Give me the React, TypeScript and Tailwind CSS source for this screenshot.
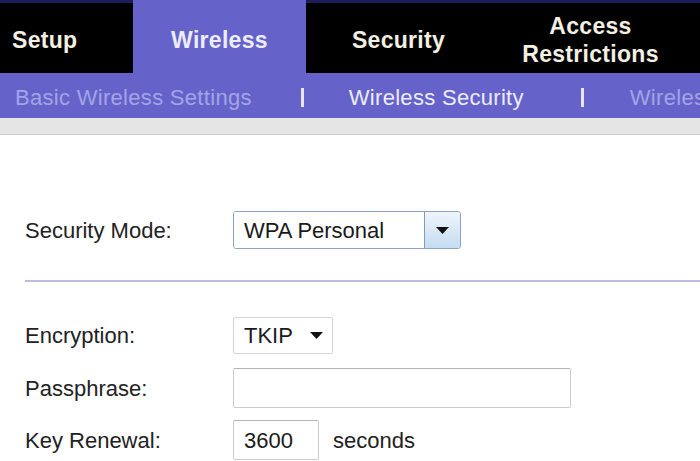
import React from "react";

const Caret = () => (
  <svg width="13" height="7" viewBox="0 0 13 7" className="block">
    <path d="M0 0 H13 L6.5 7 Z" fill="#111" />
  </svg>
);

const App = () => {
  const labelCls = "w-[208px] shrink-0 text-[22px] text-[#222]";

  return (
    <div
      className="w-[700px] h-[461px] overflow-hidden bg-white"
      style={{ fontFamily: '"Liberation Sans", Arial, sans-serif' }}
    >
      {/* Top tabs */}
      <div className="flex h-[73px] text-[23px] font-bold tracking-[0.3px] leading-[28px]">
        <div className="w-[133px] bg-black border-t-[3px] border-[#1d1d5c] flex items-center pt-[3px] pl-[12px] text-[#f4f0e2]">
          Setup
        </div>
        <div className="w-[173px] bg-[#6563c9] flex items-center justify-center pt-[6px] text-[#ececfa]">
          Wireless
        </div>
        <div className="w-[185px] bg-black border-t-[3px] border-[#1d1d5c] flex items-center justify-center pt-[3px] text-[#f4f0e2]">
          Security
        </div>
        <div className="w-[199px] bg-black border-t-[3px] border-[#1d1d5c] flex flex-col items-center justify-center pt-[4px] text-center text-[#f4f0e2]">
          <span>Access</span>
          <span>Restrictions</span>
        </div>
        <div className="flex-1 bg-black border-t-[3px] border-[#1d1d5c]" />
      </div>

      {/* Sub navigation */}
      <div className="h-[45px] bg-[#6563c9] flex items-center pt-[3px] text-[22px] tracking-[0.3px] whitespace-nowrap overflow-hidden">
        <span className="ml-[15px] text-[#a3a3e6]">Basic Wireless Settings</span>
        <span className="ml-[49px] block shrink-0 w-[3px] h-[19px] bg-[#e6e6f8]" />
        <span className="ml-[45px] text-[#ececfc]">Wireless Security</span>
        <span className="ml-[57px] block shrink-0 w-[3px] h-[19px] bg-[#e6e6f8]" />
        <span className="ml-[46px] text-[#a3a3e6]">Wireless MAC Filter</span>
      </div>
      <div className="h-[17px] bg-[#e5e5e5] border-b border-[#cdcdcd]" />

      {/* Form */}
      <div className="pl-[25px]">
        <div className="mt-[76px] flex items-center h-[38px]">
          <div className={labelCls}>Security Mode:</div>
          <div className="w-[228px] h-[38px] flex border border-[#8ea3c2] rounded-[3px] overflow-hidden">
            <div className="flex-1 flex items-center pl-[10px] text-[22px] text-[#1a1a1a] bg-white">
              WPA Personal
            </div>
            <div className="w-[36px] flex items-center justify-center border-l border-[#7f9cc0] bg-gradient-to-b from-[#eef5fc] to-[#c6dcf1]">
              <Caret />
            </div>
          </div>
        </div>

        <div className="mt-[31px] h-[2px] bg-[#bcbcdc]" />

        <div className="mt-[35px] flex items-center h-[37px]">
          <div className={labelCls}>Encryption:</div>
          <div className="w-[100px] h-[37px] flex items-center border border-[#d4d4d4] rounded-[2px] pl-[10px] text-[22px] text-[#1a1a1a]">
            <span>TKIP</span>
            <span className="ml-[17px]">
              <Caret />
            </span>
          </div>
        </div>

        <div className="mt-[14px] flex items-center h-[40px]">
          <div className={labelCls}>Passphrase:</div>
          <div className="w-[338px] h-[40px] border border-[#cbcbcb] border-t-[#b5b5b5] rounded-[2px]" />
        </div>

        <div className="mt-[12px] flex items-center h-[40px]">
          <div className={labelCls}>Key Renewal:</div>
          <div className="w-[86px] h-[40px] flex items-center border border-[#cbcbcb] border-t-[#b5b5b5] rounded-[2px] pl-[10px] text-[22px] text-[#1a1a1a]">
            3600
          </div>
          <span className="ml-[14px] text-[22px] text-[#222]">seconds</span>
        </div>
      </div>
    </div>
  );
};

export default App;
